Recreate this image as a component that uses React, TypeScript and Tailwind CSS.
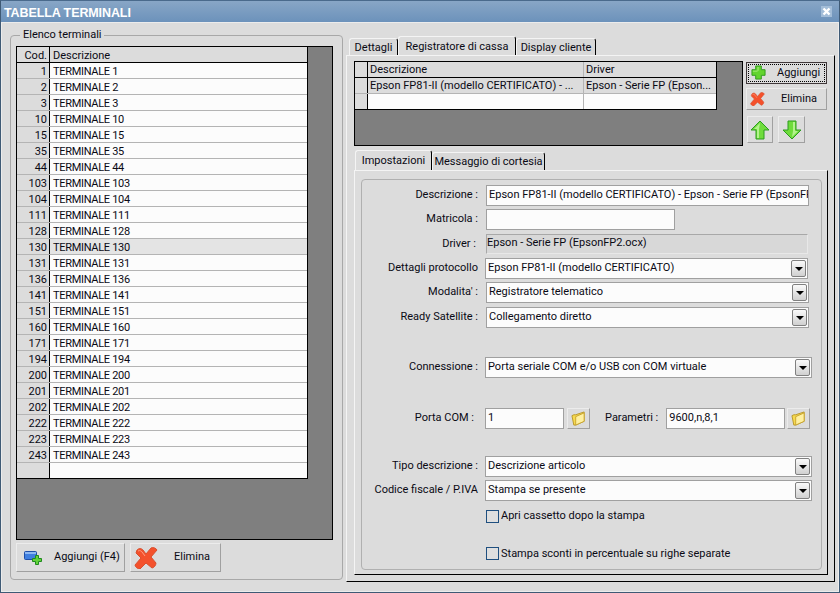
import React from "react";

const terminals = [1, 2, 3, 10, 15, 35, 44, 103, 104, 111, 128, 130, 131, 136, 141, 151, 160, 171, 194, 200, 201, 202, 222, 223, 243];

function PlusIcon({ className }: { className: string }) {
  return (
    <svg viewBox="0 0 16 16" className={className}>
      <path d="M5 1h6v4h4v6h-4v4H5v-4H1V5h4z" fill="#63d42f" stroke="#2f9a1c" />
      <path d="M6 2h2v4H2v1h5V2z" fill="#b6f08e" />
    </svg>
  );
}

function CrossIcon({ className }: { className: string }) {
  return (
    <svg viewBox="0 0 24 22" className={className}>
      <path
        d="M3 3c2-2 4-2 6 0l3 4 5-6c2-1 5 0 6 2l-6 7 5 6c0 2-2 5-4 5l-6-5-6 6c-2 0-5-2-5-4l6-7-5-5z"
        fill="#f4512c"
        stroke="#d8502f"
      />
      <path d="M4 4c2-1 3 0 4 1l3 4" fill="none" stroke="#ff9d80" />
    </svg>
  );
}

function ArrowIcon({ up }: { up?: boolean }) {
  return (
    <svg viewBox="0 0 20 20" className={up ? "w-[20px] h-[20px]" : "w-[20px] h-[20px] rotate-180"}>
      <path d="M10 1l9 9h-5v9H6v-9H1z" fill="#6fdc3c" stroke="#2c9c1f" />
      <path d="M10 3L4 9h3v9h2V9z" fill="#b4f28e" />
    </svg>
  );
}

function FolderIcon() {
  return (
    <svg viewBox="0 0 16 16" className="w-[15px] h-[15px]">
      <path d="M1 5l2-1h2l9-3v10l-9 4H3z" fill="#f6d94e" stroke="#b8962a" />
      <path d="M5 6l9-4v9l-9 4z" fill="#fff0a0" stroke="#c9a530" />
    </svg>
  );
}

function AddWindowIcon() {
  return (
    <svg viewBox="0 0 18 14" className="w-[18px] h-[14px]">
      <rect x="0.5" y="0.5" width="12" height="8" rx="1" fill="#3f7fe0" stroke="#1f4fa8" />
      <rect x="1" y="1" width="11" height="2" fill="#8cb8f4" />
      <path d="M11.5 4.5h3v3h3v3h-3v3h-3v-3h-3v-3h3z" fill="#62d23a" stroke="#1f8a1f" />
    </svg>
  );
}

function Tab({ label, active, className }: { label: string; active?: boolean; className: string }) {
  return (
    <div
      className={
        "flex items-center justify-center pt-[2px] rounded-t-[3px] border-t border-l border-r border-t-[#f4f4f4] border-l-[#f4f4f4] border-r-black " +
        (active ? "bg-[#dcdcdc] " : "bg-[#d8d8d8] ") +
        className
      }
    >
      {label}
    </div>
  );
}

function GrayButton({ className, children }: { className: string; children: React.ReactNode }) {
  return (
    <div
      className={
        "flex items-center bg-[#dcdcdc] border border-t-[#ececec] border-l-[#ececec] border-r-[#a0a0a0] border-b-[#a0a0a0] " +
        className
      }
    >
      {children}
    </div>
  );
}

function Label({ children, className }: { children: string; className?: string }) {
  return <div className={"w-[116px] shrink-0 text-right " + (className ?? "mr-[8px]")}>{children}</div>;
}

function TextBox({ value, className }: { value?: string; className: string }) {
  return (
    <div className={"h-[21px] flex items-center bg-[#fcfcfc] border border-[#a0a0a0] px-[2px] overflow-hidden whitespace-nowrap " + className}>
      {value}
    </div>
  );
}

function Combo({ value, className }: { value: string; className: string }) {
  return (
    <div className={"h-[21px] flex items-center justify-between bg-[#fcfcfc] border border-[#a0a0a0] pl-[2px] pr-[1px] whitespace-nowrap " + className}>
      <span>{value}</span>
      <div className="w-[15px] h-[17px] flex items-center justify-center rounded-[2px] border border-[#808080] bg-gradient-to-b from-[#fafafa] to-[#d0d0d0]">
        <div className="w-0 h-0 border-x-[4px] border-x-transparent border-t-[4px] border-t-black" />
      </div>
    </div>
  );
}

function FolderButton() {
  return (
    <GrayButton className="w-[23px] h-[21px] justify-center">
      <FolderIcon />
    </GrayButton>
  );
}

function Check({ label, className }: { label: string; className: string }) {
  return (
    <div className={"flex items-center pl-[124px] " + className}>
      <div className="w-[13px] h-[13px] mr-[2px] border border-[#1f4f7f] bg-[#dfdfdf]" />
      <span>{label}</span>
    </div>
  );
}

export default function App() {
  return (
    <div className="w-[840px] h-[593px] flex flex-col overflow-hidden bg-[#dcdcdc] border border-t-[#4a6a8c] border-x-[#3f5a75] border-b-[#3f5a75] text-[11px] text-[#0a0a14] font-['Roboto',sans-serif]">
      <div className="h-[21px] shrink-0 flex items-center justify-between pl-[3px] pr-[7px] pt-[3px] bg-gradient-to-b from-[#88a6c6] to-[#6c92bb] text-white">
        <span className="text-[12.5px] font-bold tracking-[-0.1px] font-['Liberation_Sans',sans-serif]">TABELLA TERMINALI</span>
        <div className="w-[11px] h-[11px] -mt-[3px] flex items-center justify-center bg-[#a3bdd8]">
          <svg viewBox="0 0 11 11" className="w-[11px] h-[11px]">
            <path d="M2.5 2.5l6 6M8.5 2.5l-6 6" stroke="white" strokeWidth="2.4" />
          </svg>
        </div>
      </div>

      <div className="flex flex-1 pl-[8px] pr-[3px] border-t border-x border-b border-[#ececec]">
        <fieldset className="w-[333px] h-[551px] mt-[6px] mr-[3px] px-[5px] rounded-[4px] border border-[#a8a8a8]">
          <legend className="ml-[4px] px-[3px] leading-[12px]">Elenco terminali</legend>
          <div className="w-[317px] h-[494px] mt-[5px] bg-[#7f7f7f] border border-black leading-[18px]">
            <div className="w-[291px] bg-[#fcfcfc] border-r border-black">
              <div className="flex h-[16px] bg-[#dcdcdc] border-b border-black">
                <div className="w-[33px] text-right pr-[2px] border-r border-black">Cod.</div>
                <div className="pl-[3px]">Descrizione</div>
              </div>
              {terminals.map((id) => (
                <div key={id} className={"flex h-[16px] border-b border-[#b4b4b4] " + (id === 130 ? "bg-[#e4e4e4]" : "")}>
                  <div className="w-[33px] text-right pr-[2px] bg-[#dcdcdc] border-r border-black">{id}</div>
                  <div className="pl-[3px] tracking-[-0.3px]">TERMINALE {id}</div>
                </div>
              ))}
              <div className="flex h-[16px] border-b border-black">
                <div className="w-[33px] bg-[#dcdcdc] border-r border-black" />
              </div>
            </div>
          </div>
          <div className="flex mt-[3px] gap-[5px]">
            <GrayButton className="w-[109px] h-[29px] pl-[7px]">
              <AddWindowIcon />
              <span className="ml-[12px]">Aggiungi (F4)</span>
            </GrayButton>
            <GrayButton className="w-[91px] h-[29px] pl-[3px]">
              <CrossIcon className="w-[24px] h-[22px]" />
              <span className="ml-[16px]">Elimina</span>
            </GrayButton>
          </div>
        </fieldset>

        <div className="w-[489px] mt-[13px] flex flex-col">
          <div className="flex h-[19px] pl-[3px] items-end">
            <Tab label="Dettagli" className="w-[49px] h-[17px]" />
            <Tab label="Registratore di cassa" active className="w-[118px] h-[19px]" />
            <Tab label="Display cliente" className="w-[80px] h-[17px]" />
          </div>
          <div className="h-[527px] pt-[5px] pl-[7px] border border-t-[#f4f4f4] border-l-[#f4f4f4] border-r-black border-b-black">
            <div className="flex">
              <div className="w-[389px] h-[85px] bg-[#7f7f7f] border border-black">
                <div className="w-[362px] bg-[#fcfcfc] border-r border-black">
                  <div className="flex h-[16px] bg-[#dcdcdc] border-b border-black">
                    <div className="w-[13px] border-r border-black" />
                    <div className="w-[216px] pl-[2px] border-r border-[#b4b4b4]">Descrizione</div>
                    <div className="pl-[2px]">Driver</div>
                  </div>
                  <div className="flex h-[16px] bg-[#dcdcdc] border-b border-[#b4b4b4]">
                    <div className="w-[13px] border-r border-black" />
                    <div className="w-[216px] pl-[2px] border-r border-[#b4b4b4]">Epson FP81-II (modello CERTIFICATO) - ...</div>
                    <div className="pl-[2px]">Epson - Serie FP (Epson...</div>
                  </div>
                  <div className="flex h-[16px] border-b border-black">
                    <div className="w-[13px] bg-[#dcdcdc] border-r border-black" />
                    <div className="w-[216px] border-r border-[#b4b4b4]" />
                  </div>
                </div>
              </div>
              <div className="ml-[3px] w-[81px] flex flex-col">
                <div className="mt-[1px] h-[22px] flex items-center p-[1px] border border-[#40383a] bg-[#dcdcdc]">
                  <div className="w-full h-full flex items-center border border-dotted border-black pl-[2px]">
                    <PlusIcon className="w-[15px] h-[15px] -mt-[2px]" />
                    <span className="ml-[11px]">Aggiungi</span>
                  </div>
                </div>
                <GrayButton className="mt-[4px] h-[22px] pl-[3px]">
                  <CrossIcon className="w-[15px] h-[14px]" />
                  <span className="ml-[16px]">Elimina</span>
                </GrayButton>
                <div className="flex mt-[6px] gap-[5px] pl-[1px]">
                  <GrayButton className="w-[26px] h-[27px] justify-center">
                    <ArrowIcon up />
                  </GrayButton>
                  <GrayButton className="w-[27px] h-[27px] justify-center">
                    <ArrowIcon />
                  </GrayButton>
                </div>
              </div>
            </div>

            <div className="flex h-[20px] mt-[4px] pl-[1px] items-end">
              <Tab label="Impostazioni" active className="w-[77px] h-[20px]" />
              <Tab label="Messaggio di cortesia" className="w-[113px] h-[18px]" />
            </div>
            <div className="w-[474px] h-[405px] pt-[8px] pl-[6px] border border-t-[#f4f4f4] border-l-[#f4f4f4] border-r-black border-b-black">
              <div className="w-[461px] h-[391px] pt-[5px] rounded-[4px] border border-[#b0b0b0]">
                <div className="flex items-center">
                  <Label>Descrizione :</Label>
                  <TextBox value="Epson FP81-II (modello CERTIFICATO) - Epson - Serie FP (EpsonFP2.ocx)" className="w-[323px]" />
                </div>
                <div className="flex items-center mt-[3px]">
                  <Label>Matricola :</Label>
                  <TextBox className="w-[189px]" />
                </div>
                <div className="flex items-center mt-[4px]">
                  <Label className="mr-[10px] -ml-[2px]">Driver :</Label>
                  <div className="w-[322px] h-[20px] bg-[#d8d8d8] border border-t-[#a8a8a8] border-l-[#a8a8a8] border-r-[#e8e8e8] border-b-[#e8e8e8]">
                    Epson - Serie FP (EpsonFP2.ocx)
                  </div>
                </div>
                <div className="flex items-center mt-[4px]">
                  <Label>Dettagli protocollo</Label>
                  <Combo value="Epson FP81-II (modello CERTIFICATO)" className="w-[323px] -ml-[1px]" />
                </div>
                <div className="flex items-center mt-[3px]">
                  <Label>Modalita' :</Label>
                  <Combo value="Registratore telematico" className="w-[323px]" />
                </div>
                <div className="flex items-center mt-[4px]">
                  <Label>Ready Satellite :</Label>
                  <Combo value="Collegamento diretto" className="w-[323px]" />
                </div>
                <div className="flex items-center mt-[29px]">
                  <Label>Connessione :</Label>
                  <Combo value="Porta seriale COM e/o USB con COM virtuale" className="w-[327px] -ml-[1px]" />
                </div>
                <div className="flex items-center mt-[30px]">
                  <Label className="mr-[12px] -ml-[4px]">Porta COM :</Label>
                  <TextBox value="1" className="w-[79px] -ml-[1px]" />
                  <div className="ml-[3px]">
                    <FolderButton />
                  </div>
                  <div className="ml-[15px] mr-[8px]">Parametri :</div>
                  <TextBox value="9600,n,8,1" className="w-[119px]" />
                  <div className="ml-[2px]">
                    <FolderButton />
                  </div>
                </div>
                <div className="flex items-center mt-[27px]">
                  <Label>Tipo descrizione :</Label>
                  <Combo value="Descrizione articolo" className="w-[327px] -ml-[1px]" />
                </div>
                <div className="flex items-center mt-[3px]">
                  <Label>Codice fiscale / P.IVA</Label>
                  <Combo value="Stampa se presente" className="w-[327px] -ml-[1px]" />
                </div>
                <Check label="Apri cassetto dopo la stampa" className="mt-[7px]" />
                <Check label="Stampa sconti in percentuale su righe separate" className="mt-[21px]" />
              </div>
            </div>
          </div>
        </div>
      </div>
    </div>
  );
}
